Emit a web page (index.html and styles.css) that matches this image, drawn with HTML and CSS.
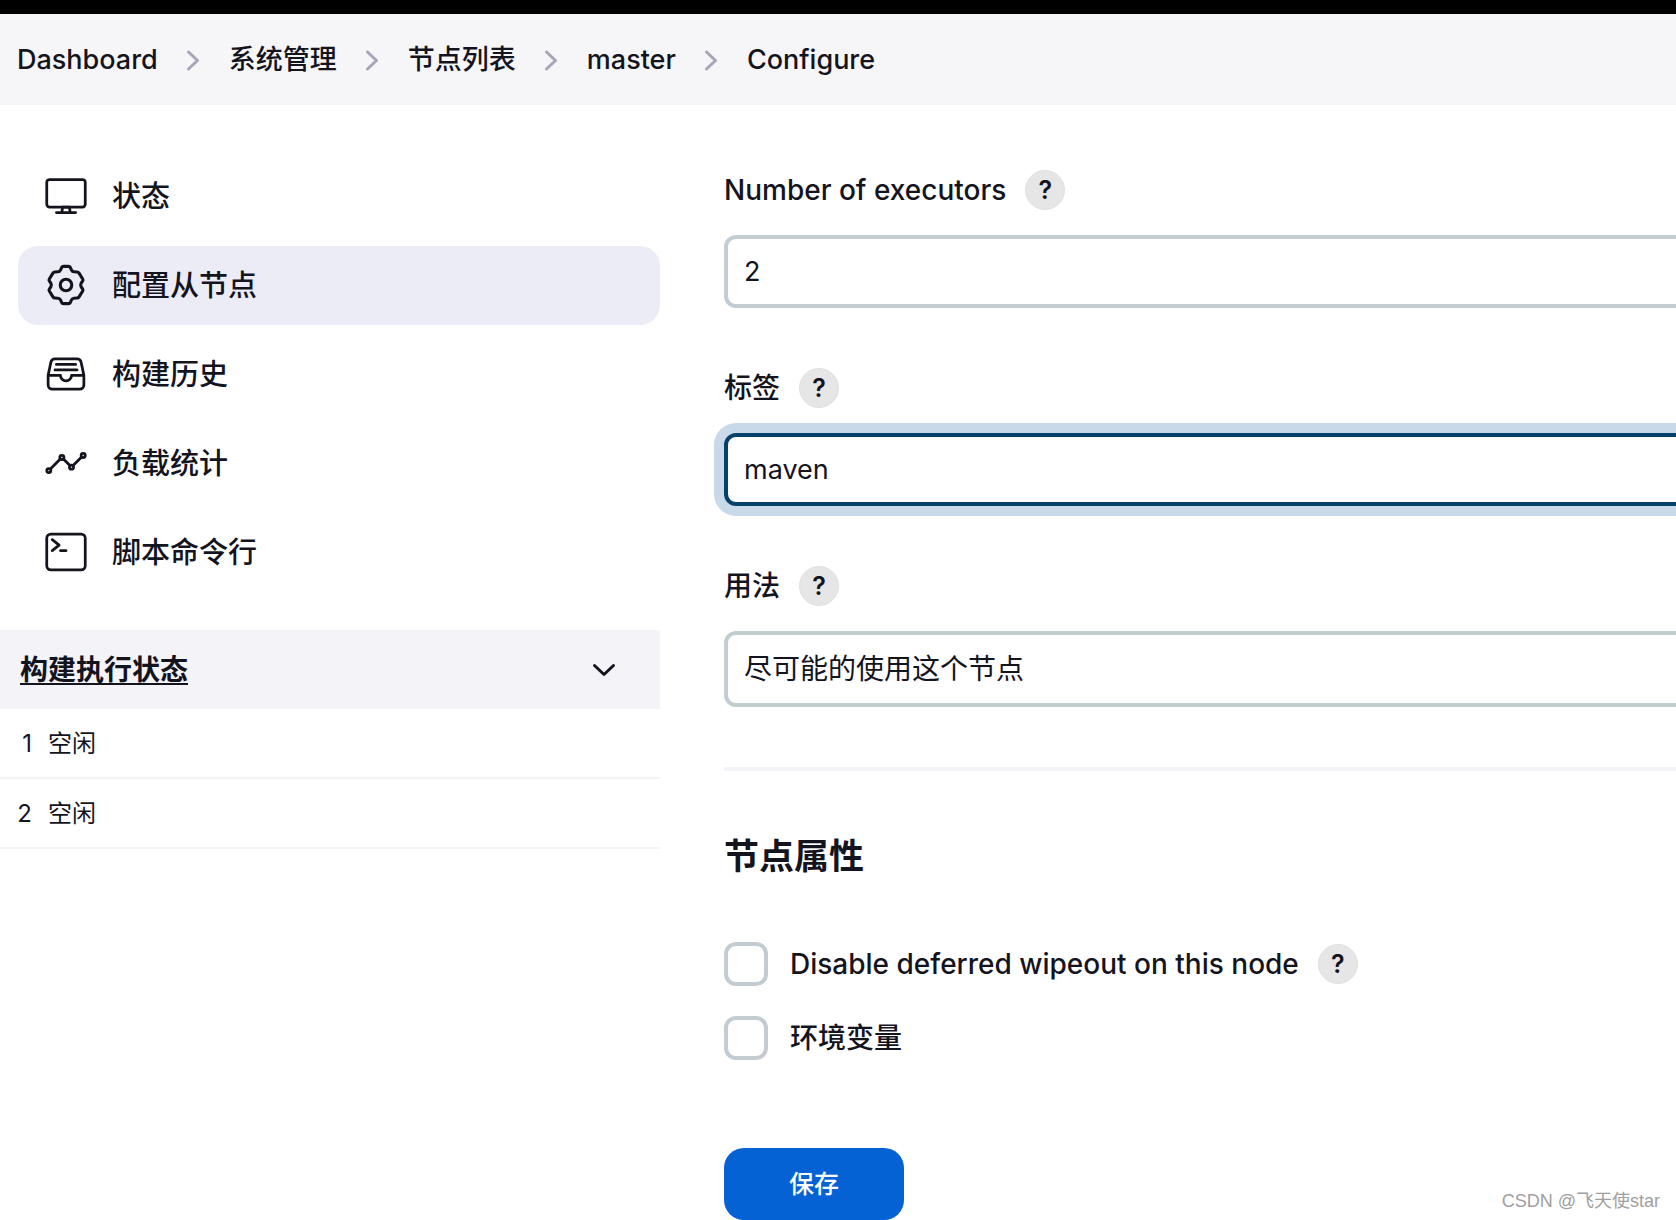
FILE: index.html
```html
<!DOCTYPE html>
<html lang="zh-CN">
<head>
<meta charset="utf-8">
<meta name="viewport" content="width=device-width, initial-scale=1">
<title>master Configure</title>
<link rel="stylesheet" href="styles.css">
</head>
<body>
<header class="topbar">
  <nav aria-label="Breadcrumb">
    <ol class="breadcrumbs">
      <li><a href="#">Dashboard</a></li>
      <li><svg class="crumb-arrow" viewBox="0 0 12 20" aria-hidden="true"><path d="M1.5 1.5 10.5 10 1.5 18.5"/></svg><a href="#">系统管理</a></li>
      <li><svg class="crumb-arrow" viewBox="0 0 12 20" aria-hidden="true"><path d="M1.5 1.5 10.5 10 1.5 18.5"/></svg><a href="#">节点列表</a></li>
      <li><svg class="crumb-arrow" viewBox="0 0 12 20" aria-hidden="true"><path d="M1.5 1.5 10.5 10 1.5 18.5"/></svg><a href="#">master</a></li>
      <li><svg class="crumb-arrow" viewBox="0 0 12 20" aria-hidden="true"><path d="M1.5 1.5 10.5 10 1.5 18.5"/></svg><a href="#">Configure</a></li>
    </ol>
  </nav>
</header>

<div class="layout">
  <aside class="sidebar">
    <nav class="tasks" aria-label="Tasks">
      <a class="task" href="#">
        <svg class="task-icon" viewBox="0 0 512 512" aria-hidden="true"><rect x="32" y="64" width="448" height="320" rx="32"/><path d="M304 448l-8-64h-80l-8 64zM368 448H144"/></svg>
        状态
      </a>
      <a class="task task-active" href="#" aria-current="page">
        <svg class="task-icon" viewBox="0 0 512 512" aria-hidden="true"><circle cx="256" cy="256" r="67"/><path d="M228 39H284Q300 39 307 53L320 82Q329 101 350 102L384 104Q400 105 408 118L450 186Q458 199 449 211L433 233Q420 256 433 279L449 301Q458 313 450 326L408 394Q400 407 384 408L350 410Q329 411 320 430L307 459Q300 473 284 473H228Q212 473 205 459L192 430Q183 411 162 410L128 408Q112 407 104 394L62 326Q54 313 63 301L79 279Q92 256 79 233L63 211Q54 199 62 186L104 118Q112 105 128 104L162 102Q183 101 192 82L205 53Q212 39 228 39Z"/></svg>
        配置从节点
      </a>
      <a class="task" href="#">
        <svg class="task-icon" viewBox="0 0 512 512" aria-hidden="true"><path d="M384 80H128c-26 0-43 14-48 40L48 272v112a48.14 48.14 0 0048 48h320a48.14 48.14 0 0048-48V272l-32-152c-5-27-23-40-48-40zM48 272h144M320 272h144M192 272a64 64 0 00128 0M144 144h224M128 208h256"/></svg>
        构建历史
      </a>
      <a class="task" href="#">
        <svg class="task-icon" viewBox="0 0 512 512" aria-hidden="true"><path d="M344 280l88-88M232 216l64 64M80 320l104-104"/><circle cx="456" cy="168" r="24"/><circle cx="320" cy="304" r="24"/><circle cx="208" cy="192" r="24"/><circle cx="56" cy="344" r="24"/></svg>
        负载统计
      </a>
      <a class="task" href="#">
        <svg class="task-icon" viewBox="0 0 512 512" aria-hidden="true"><rect x="32" y="48" width="448" height="416" rx="48"/><path d="M96 112l80 64-80 64M192 240h64"/></svg>
        脚本命令行
      </a>
    </nav>

    <section class="executors">
      <div class="executors-head">
        <a class="executors-title" href="#">构建执行状态</a>
        <button class="collapse" type="button" aria-label="Collapse">
          <svg viewBox="0 0 24 14" aria-hidden="true"><path d="M2.500 2.500 12 11.500 21.500 2.500"/></svg>
        </button>
      </div>
      <table class="executors-table">
        <tbody>
          <tr><td class="num">1</td><td>空闲</td></tr>
          <tr><td class="num">2</td><td>空闲</td></tr>
        </tbody>
      </table>
    </section>
  </aside>

  <main class="content">
    <form class="config">
      <div class="field">
        <div class="field-label"><label for="executors">Number of executors</label><button class="help" type="button" aria-label="Help: executors">?</button></div>
        <input class="control" id="executors" type="text" value="2">
      </div>
      <div class="field">
        <div class="field-label"><label for="labels">标签</label><button class="help" type="button" aria-label="Help: labels">?</button></div>
        <input class="control control-focused" id="labels" type="text" value="maven">
      </div>
      <div class="field">
        <div class="field-label"><label for="usage">用法</label><button class="help" type="button" aria-label="Help: usage">?</button></div>
        <select class="control control-select" id="usage"><option>尽可能的使用这个节点</option></select>
      </div>

      <section class="properties">
        <h2>节点属性</h2>
        <div class="check-row">
          <input class="check" id="wipeout" type="checkbox"><label for="wipeout">Disable deferred wipeout on this node</label><button class="help" type="button" aria-label="Help: wipeout">?</button>
        </div>
        <div class="check-row">
          <input class="check" id="env" type="checkbox"><label for="env">环境变量</label>
        </div>
      </section>

      <button class="save" type="submit">保存</button>
    </form>
  </main>
</div>
<div class="watermark">CSDN @飞天使star</div>
</body>
</html>
```
FILE: styles.css
```css
:root {
  --text: #14141f;
  --line: #f3f3f8;
  --border: #c3ccd1;
  --accent: #0462d4;
}

* {
  box-sizing: border-box;
}

body {
  margin: 0;
  position: relative;
  min-height: 100vh;
  overflow-x: hidden;
  background: #fff;
  color: var(--text);
  font-family: Inter, "Noto Sans CJK SC", sans-serif;
  font-size: 28px;
  font-weight: 500;
  line-height: 40px;
}

a {
  color: inherit;
  text-decoration: none;
}

button,
input,
select {
  font: inherit;
  color: inherit;
}

svg {
  fill: none;
  stroke: currentColor;
  stroke-linecap: round;
  stroke-linejoin: round;
}

/* Breadcrumb bar */
.topbar {
  border-top: 14px solid #000;
  background: #f6f6f8;
  padding: 26px 17px 25px;
}

.breadcrumbs {
  display: flex;
  gap: 29px;
  margin: 0;
  padding: 0;
  list-style: none;
  font-size: 27px;
}

.breadcrumbs li {
  display: flex;
  align-items: center;
  gap: 30px;
}

.crumb-arrow {
  width: 12px;
  height: 21px;
  color: #a6a6ba;
  stroke-width: 3;
}

.layout {
  display: grid;
  grid-template-columns: 660px minmax(0, 1fr);
  gap: 64px;
}

/* Side panel */
.tasks {
  display: flex;
  flex-direction: column;
  gap: 10px;
  padding: 52px 0 38px 18px;
}

.task {
  display: flex;
  align-items: flex-end;
  gap: 24px;
  padding: 17px 26px 18px;
  border-radius: 20px;
  font-size: 29px;
  line-height: 42px;
}

.task-active {
  background: #ececf6;
}

.task-icon {
  width: 44px;
  height: 44px;
  stroke-width: 32;
}

.task-active .task-icon {
  stroke-width: 36;
}

.executors-head {
  display: flex;
  align-items: center;
  justify-content: space-between;
  padding: 20px 44px 19px 20px;
  background: var(--line);
}

.executors-title {
  font-weight: 700;
  text-decoration: underline;
  text-decoration-thickness: 2px;
  text-underline-offset: 3px;
}

.collapse {
  display: flex;
  padding: 0;
  border: 0;
  background: none;
}

.collapse svg {
  width: 24px;
  height: 14px;
  stroke-width: 3;
}

.executors-table {
  width: 100%;
  border-spacing: 0;
  font-size: 24px;
  font-weight: 400;
}

.executors-table td {
  height: 70px;
  padding: 2px 0 0;
  border-bottom: 2px solid var(--line);
}

.executors-table .num {
  width: 48px;
  padding-right: 16px;
  text-align: right;
}

/* Configuration form */
.config {
  padding-top: 65px;
  margin-right: -40px;
}

.field {
  margin-bottom: 60px;
}

.field-label {
  display: flex;
  align-items: center;
  gap: 19px;
  margin-bottom: 25px;
}

.help {
  width: 40px;
  height: 40px;
  padding: 0;
  border: 1px solid #e0e0e0;
  border-radius: 50%;
  background: #e6e6e6;
  font-size: 25px;
  font-weight: 600;
  line-height: 38px;
  text-align: center;
}

.control {
  display: block;
  width: 100%;
  height: 73px;
  padding: 0 16px;
  border: 4px solid var(--border);
  border-radius: 12px;
  outline: 0;
  background: #fff;
  font-size: 27px;
  font-weight: 400;
}

.control-focused {
  border-color: #06416a;
  box-shadow: 0 0 0 10px #c8d9e9;
}

.control-select {
  height: 76px;
  appearance: none;
  font-size: 28px;
}

.properties {
  border-top: 4px solid var(--line);
  padding-top: 60px;
}

.properties h2 {
  margin: 0 0 61px;
  font-size: 35px;
  font-weight: 700;
  line-height: 50px;
}

.check-row {
  display: flex;
  align-items: center;
  margin-bottom: 30px;
}

.check {
  appearance: none;
  width: 44px;
  height: 44px;
  margin: 0 22px 0 0;
  border: 4px solid var(--border);
  border-radius: 12px;
  background: #fff;
}

.check-row .help {
  margin-left: 19px;
}

.save {
  display: block;
  width: 180px;
  height: 72px;
  margin-top: 88px;
  padding: 0;
  border: 0;
  border-radius: 20px;
  background: var(--accent);
  color: #fff;
  font-size: 25px;
}

.watermark {
  position: absolute;
  right: 16px;
  bottom: 6px;
  color: #a0a0a0;
  font-family: "Liberation Sans", "Noto Sans CJK SC", sans-serif;
  font-size: 18px;
  font-weight: 400;
  line-height: 26px;
}
```
